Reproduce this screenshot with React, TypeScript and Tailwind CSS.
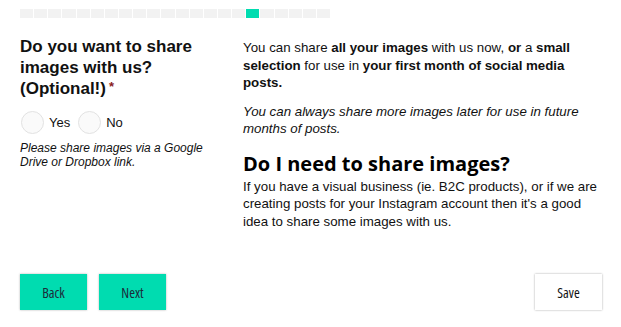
import React from 'react';

const SEGMENTS = 22;
const CURRENT = 16;

function Progress() {
  return (
    <div className="flex h-[9px] w-[310px] gap-px">
      {Array.from({ length: SEGMENTS }).map((_, i) => (
        <div
          key={i}
          className={i === CURRENT ? 'flex-1 bg-[#00dcb0]' : 'flex-1 bg-[#f2f2f2]'}
        />
      ))}
    </div>
  );
}

function Radio({ label }: { label: string }) {
  return (
    <label className="flex items-center gap-[5px]">
      <span className="block h-[23px] w-[23px] rounded-full border border-[#e2e2e2] bg-[#fafafa]" />
      <span className="text-[13px] text-[#111]">{label}</span>
    </label>
  );
}

export default function App() {
  return (
    <div className="h-[327px] w-[621px] bg-white font-['Liberation_Sans',Arial,sans-serif] text-[#111]">
      <div className="px-5 pt-[9px]">
        <Progress />
      </div>

      <div className="mt-[13px] flex h-[210px] pl-5">
        <div className="w-[200px] pt-[5px]">
          <h2 className="text-[17px] leading-[21px] font-bold">
            Do you want to share images with us? (Optional!)
            <span className="relative -top-[3px] ml-[3px] text-[13px] text-[#8a1c1c]">*</span>
          </h2>
          <div className="mt-[11px] flex gap-[8px] pl-[1px]">
            <Radio label="Yes" />
            <Radio label="No" />
          </div>
          <p className="mt-[7px] text-[12px] leading-[14px] italic">
            Please share images via a Google Drive or Dropbox link.
          </p>
        </div>

        <div className="ml-[23px] w-[358px] pt-[8px] text-[13.3px] leading-[17.5px]">
          <p>
            You can share <b>all your images</b> with us now, <b>or</b> a{' '}
            <b>small selection</b> for use in <b>your first month of social media posts.</b>
          </p>
          <p className="mt-[11px] italic">
            You can always share more images later for use in future months of posts.
          </p>
          <h3 className="mt-[13px] font-['Open_Sans',sans-serif] text-[20px] leading-[26px] font-bold text-black">
            Do I need to share images?
          </h3>
          <p className="mt-[1px]">
            If you have a visual business (ie. B2C products), or if we are creating posts for
            your Instagram account then it's a good idea to share some images with us.
          </p>
        </div>
      </div>

      <div className="mt-[33px] flex justify-between px-5 font-['Open_Sans',sans-serif] font-stretch-condensed">
        <div className="flex gap-3">
          <button className="h-9 w-[67px] bg-[#00dcb0] text-[14px] text-[#1d2b3a] shadow-[0_0_2px_rgba(0,0,0,0.3)]">
            Back
          </button>
          <button className="h-9 w-[67px] bg-[#00dcb0] text-[14px] text-[#1d2b3a] shadow-[0_0_2px_rgba(0,0,0,0.3)]">
            Next
          </button>
        </div>
        <button className="mr-[-1px] h-9 w-[67px] bg-white text-[14px] text-[#111] shadow-[0_0_2px_rgba(0,0,0,0.35)]">
          Save
        </button>
      </div>
    </div>
  );
}
